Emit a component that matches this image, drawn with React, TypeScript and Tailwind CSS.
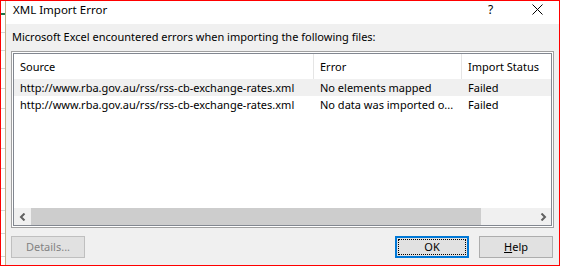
import React from "react";

const font = { fontFamily: '"Noto Sans", "Open Sans", sans-serif' };

function Chevron({ dir }: { dir: "l" | "r" }) {
  return (
    <svg width="8" height="8" viewBox="0 0 8 8">
      <path
        d={dir === "l" ? "M5.5 0.5 L2 4 L5.5 7.5" : "M2.5 0.5 L6 4 L2.5 7.5"}
        fill="none"
        stroke="#606060"
        strokeWidth="2"
      />
    </svg>
  );
}

export default function App() {
  const rows = [
    ["http://www.rba.gov.au/rss/rss-cb-exchange-rates.xml", "No elements mapped", "Failed"],
    ["http://www.rba.gov.au/rss/rss-cb-exchange-rates.xml", "No data was imported o...", "Failed"],
  ];
  return (
    <div className="w-[562px] h-[267px] bg-white overflow-hidden text-[11px] text-black" style={font}>
      <div className="w-[560px] h-[266px] border border-[#ff0000] flex">
        {/* Excel behind */}
        <div className="w-[4px] flex flex-col bg-white">
          <div className="h-[12px]" />
          <div className="h-[2px] bg-[#217346]" />
          <div className="h-[18px] border-b border-[#d4d4d4]" />
          <div className="h-[18px] border-b border-[#d4d4d4]" />
          <div className="h-[18px] border-b border-[#d4d4d4]" />
          <div className="h-[20px] border-b border-[#d4d4d4]" />
          <div className="h-[20px] border-b border-[#d4d4d4]" />
          <div className="h-[20px] border-b border-[#d4d4d4]" />
          <div className="h-[20px] border-b border-[#d4d4d4]" />
          <div className="h-[20px] border-b border-[#d4d4d4]" />
          <div className="h-[20px] border-b border-[#d4d4d4]" />
          <div className="h-[22px] border-b border-[#d4d4d4]" />
          <div className="h-[23px] border-b border-[#d4d4d4]" />
          <div className="h-[23px] border-b border-[#d4d4d4]" />
        </div>
        <div className="w-[1px] bg-[#c4ad84]" />
        {/* Dialog */}
        <div className="flex-1 flex flex-col">
          <div className="h-[23px] bg-white flex items-start relative">
            <div className="pl-[7px] pt-[1px] leading-4 text-[11.5px]">XML Import Error</div>
            <div className="absolute left-[482px] top-[1px] leading-4 text-[12px]">?</div>
            <svg className="absolute left-[526px] top-[3px]" width="11" height="11" viewBox="0 0 11 11">
              <path d="M0.5 0.5 L10.5 10.5 M10.5 0.5 L0.5 10.5" stroke="#000" strokeWidth="1" />
            </svg>
          </div>
          <div className="flex-1 bg-[#f0f0f0] px-[5px] pt-[5px] flex flex-col">
            <div className="leading-4 pl-[1px]">
              Microsoft Excel encountered errors when importing the following files:
            </div>
            <div className="mt-[6px] h-[177px] border border-[#a0a0a0] p-[1px] bg-white">
              <div className="h-full border border-[#828790] flex flex-col bg-white">
                <div className="h-[25px] flex shrink-0">
                  <div className="w-[300px] border-r border-[#e5e5e5] pl-[6px] flex items-center leading-4">Source</div>
                  <div className="w-[148px] border-r border-[#e5e5e5] pl-[6px] flex items-center leading-4">Error</div>
                  <div className="flex-1 pl-[6px] flex items-center leading-4 whitespace-nowrap overflow-hidden">Import Status</div>
                </div>
                {rows.map((r, i) => (
                  <div key={i} className={`h-[17px] flex shrink-0 items-center leading-4 ${i === 0 ? "bg-[#f0f0f0]" : ""}`}>
                    <div className="w-[300px] pl-[6px] whitespace-nowrap">{r[0]}</div>
                    <div className="w-[148px] pl-[6px] whitespace-nowrap overflow-hidden">{r[1]}</div>
                    <div className="flex-1 pl-[6px] whitespace-nowrap">{r[2]}</div>
                  </div>
                ))}
                <div className="flex-1" />
                <div className="h-[17px] flex shrink-0 bg-[#f0f0f0]">
                  <div className="w-[17px] flex items-center justify-center">
                    <Chevron dir="l" />
                  </div>
                  <div className="w-[450px] bg-[#cdcdcd]" />
                  <div className="flex-1" />
                  <div className="w-[17px] flex items-center justify-center">
                    <Chevron dir="r" />
                  </div>
                </div>
              </div>
            </div>
            <div className="mt-[8px] flex">
              <div className="w-[74px] h-[22px] border border-[#bfbfbf] bg-[#e1e1e1] flex items-center justify-center text-[#838383] leading-4">
                Details...
              </div>
              <div className="flex-1" />
              <div className="w-[74px] h-[22px] border-2 border-[#0078d7] bg-[#e1e1e1] p-[1px]">
                <div className="h-full border border-dotted border-black flex items-center justify-center leading-4">
                  OK
                </div>
              </div>
              <div className="ml-[10px] mr-[1px] w-[74px] h-[22px] border border-[#adadad] bg-[#e1e1e1] flex items-center justify-center leading-4">
                <span>
                  <span className="underline">H</span>elp
                </span>
              </div>
            </div>
          </div>
        </div>
      </div>
    </div>
  );
}
